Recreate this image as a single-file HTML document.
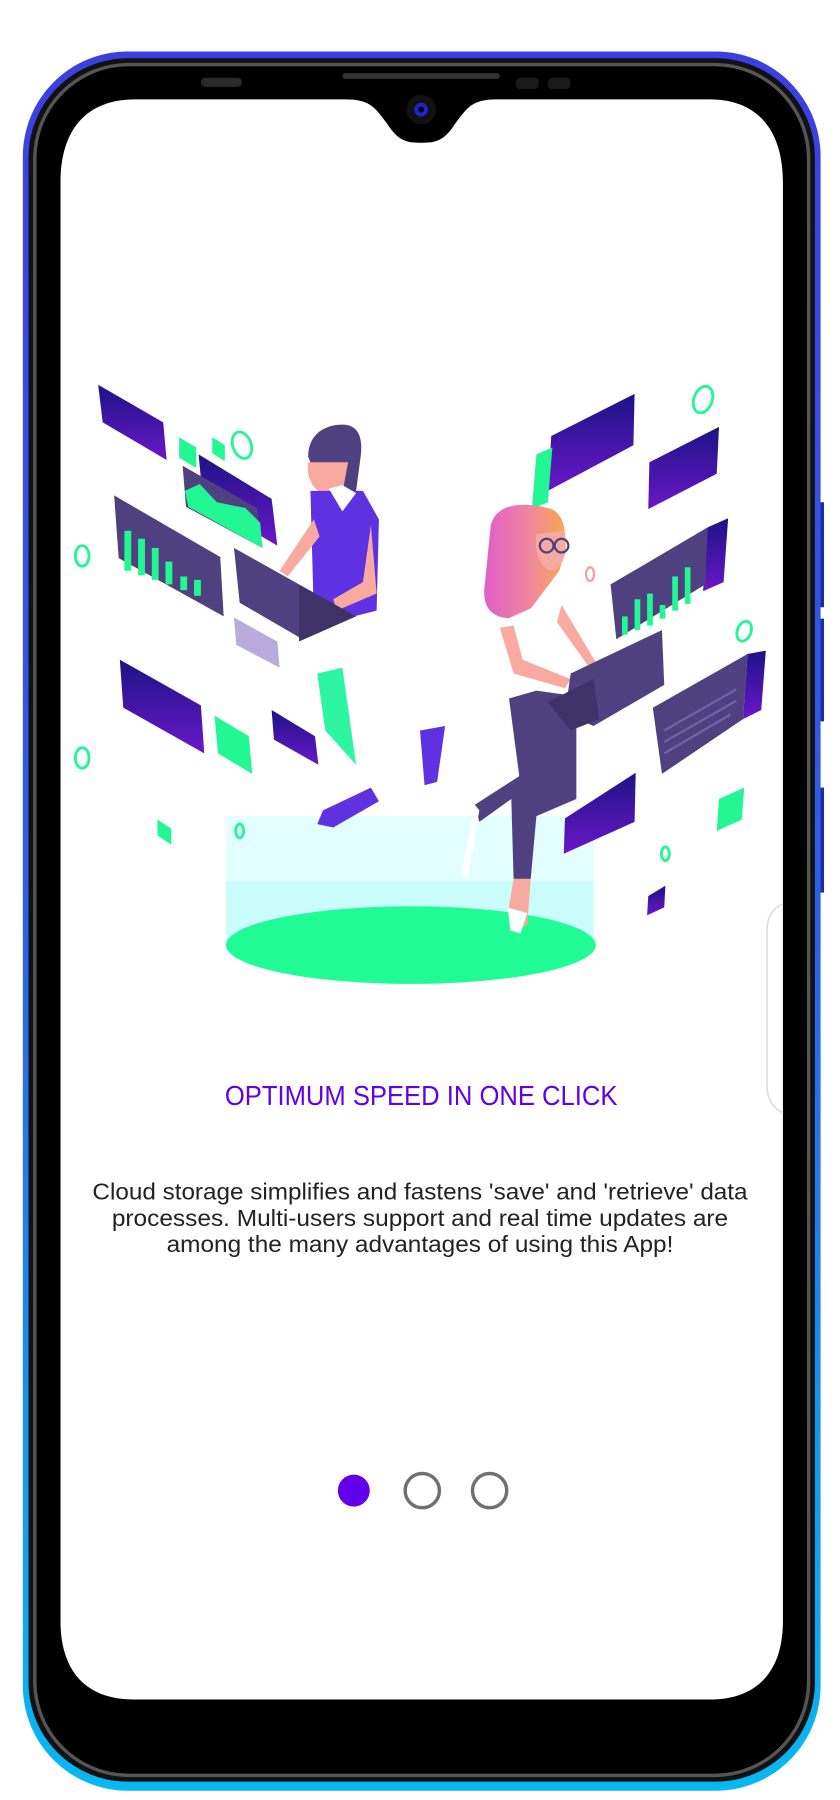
<!DOCTYPE html>
<html><head><meta charset="utf-8">
<style>
html,body{margin:0;padding:0;background:#fff;width:840px;height:1800px;overflow:hidden}
svg{display:block}
</style></head>
<body>
<svg width="840" height="1800" viewBox="0 0 736 1577" xmlns="http://www.w3.org/2000/svg" font-family="Liberation Sans, sans-serif">
<defs>
<linearGradient id="frame" x1="0" y1="0" x2="0" y2="1">
<stop offset="0" stop-color="#3b3fe0"/><stop offset="0.5" stop-color="#2f5fe6"/><stop offset="1" stop-color="#08b8f2"/>
</linearGradient>
<linearGradient id="pp" x1="0" y1="0" x2="0" y2="1">
<stop offset="0" stop-color="#1c1485"/><stop offset="1" stop-color="#6a16c8"/>
</linearGradient>
<linearGradient id="hair" x1="0" y1="0" x2="1" y2="0">
<stop offset="0" stop-color="#e05ec8"/><stop offset="0.6" stop-color="#f08a9a"/><stop offset="1" stop-color="#f8a850"/>
</linearGradient>
</defs>
<!-- phone -->
<rect x="716" y="440" width="6" height="92" fill="#1a2ea0"/>
<rect x="716" y="542" width="6" height="90" fill="#1a2ea0"/>
<rect x="716" y="690" width="6" height="92" fill="#1a2ea0"/>
<rect x="20" y="45" width="699" height="1524" rx="92" fill="url(#frame)"/>
<rect x="25" y="51" width="689" height="1510" rx="87" fill="#111"/>
<rect x="29" y="55" width="681" height="1502" rx="84" fill="#555"/>
<rect x="32" y="58" width="675" height="1496" rx="81" fill="#000"/>
<rect x="300" y="64" width="138" height="5" rx="2.5" fill="#333"/>
<rect x="176" y="68" width="36" height="8" rx="4" fill="#2a2a2a"/>
<rect x="452" y="68" width="20" height="10" rx="4" fill="#1a1a1a"/>
<rect x="480" y="68" width="20" height="10" rx="4" fill="#1a1a1a"/>
<!-- screen -->
<path d="M118 87 H303 C325 87 329 95 339 108 C349 124 357 125 369 125 C381 125 389 124 399 108 C409 95 413 87 435 87 H622 C662 87 686 112 686 160 V1420 C686 1466 662 1489 622 1489 H117 C77 1489 53 1466 53 1420 V160 C53 112 77 87 118 87 Z" fill="#fff"/>
<circle cx="369" cy="96" r="13" fill="#111"/>
<circle cx="369" cy="96" r="6" fill="#2222cc"/>
<circle cx="369" cy="96" r="2.5" fill="#000"/>
<path d="M686 792 C676 796 672 805 672 815 V950 C672 962 676 970 686 975" fill="none" stroke="#ddd" stroke-width="1.5"/>

<!-- illustration -->
<rect x="198" y="715" width="322" height="113" fill="#e2fefe"/>
<rect x="198" y="772" width="322" height="56" fill="#cbfcfc"/>
<ellipse cx="360" cy="828" rx="162" ry="34" fill="#21fb95"/>
<g fill="url(#pp)">
<polygon points="86,337 143,370 146,403 90,370"/>
<polygon points="174,398 238,437 243,478 178,440"/>
<polygon points="105,578 176,618 179,660 108,620"/>
<polygon points="238,622 276,645 279,670 240,648"/>
<polygon points="483,382 556,345 555,390 480,430"/>
<polygon points="569,405 630,374 628,415 568,446"/>
<polygon points="495,717 557,677 556,720 494,748"/>
<polygon points="568,785 583,776 582,795 567,802"/>
<polygon points="620,462 638,454 634,510 616,518"/>
<polygon points="655,573 671,570 667,622 651,630"/>
</g>
<g fill="#22f794">
<polygon points="157,383 172,392 172,410 157,401"/>
<polygon points="186,383 197,390 197,404 186,397"/>
<polygon points="138,718 150,726 150,740 138,732"/>
<polygon points="470,398 484,392 480,440 466,446"/>
<polygon points="188,627 218,645 221,678 191,660"/>
<polygon points="630,700 652,690 650,718 628,728"/>
</g>
<polygon points="100,434 193,488 196,540 104,489" fill="#4f4080"/>
<g fill="#22f794"><rect x="109" y="465" width="6" height="35"/><rect x="121" y="472" width="6" height="32"/><rect x="133" y="480" width="6" height="28"/><rect x="145" y="492" width="6" height="20"/><rect x="158" y="505" width="6" height="12"/><rect x="170" y="508" width="6" height="14"/></g>
<polygon points="160,408 225,445 230,480 163,444" fill="#4f4080"/>
<polygon points="162,430 175,424 190,440 215,445 228,458 230,480 165,444" fill="#22f794"/>
<polygon points="205,541 243,562 245,585 207,565" fill="#b9acdc"/>
<polygon points="535,512 620,462 618,512 540,560" fill="#4f4080"/>
<g fill="#22f794"><rect x="545" y="540" width="5" height="16"/><rect x="556" y="525" width="5" height="27"/><rect x="567" y="520" width="5" height="28"/><rect x="578" y="530" width="5" height="12"/><rect x="589" y="505" width="5" height="30"/><rect x="600" y="497" width="5" height="32"/></g>
<polygon points="572,620 655,573 651,630 580,678" fill="#4f4080"/>
<g stroke="#6f62a8" stroke-width="2"><line x1="582" y1="640" x2="645" y2="604"/><line x1="582" y1="650" x2="645" y2="614"/><line x1="582" y1="660" x2="640" y2="626"/></g>
<g fill="none" stroke="#22f794" stroke-width="2.5">
<ellipse cx="616" cy="350" rx="8" ry="12" transform="rotate(20 616 350)"/>
<ellipse cx="212" cy="390" rx="8" ry="12" transform="rotate(-20 212 390)"/>
<ellipse cx="72" cy="487" rx="6" ry="9"/>
<ellipse cx="72" cy="664" rx="6" ry="9"/>
<ellipse cx="652" cy="553" rx="6" ry="9" transform="rotate(20 652 553)"/>
<ellipse cx="210" cy="728" rx="3.5" ry="6"/>
<ellipse cx="583" cy="748" rx="3.5" ry="6"/>
</g>
<ellipse cx="517" cy="503" rx="3.5" ry="6" fill="none" stroke="#f4a0a0" stroke-width="2"/>
<!-- man -->
<path d="M278 590 L285 640 L312 670 L300 585 Z" fill="#2ef5a0"/>
<path d="M270 400 C270 380 285 372 300 372 C315 372 318 385 316 400 L312 430 L285 438 Z" fill="#4f4080"/>
<path d="M270 405 C268 420 275 432 290 435 L300 432 L305 405 Z" fill="#f8aaa0"/>
<path d="M272 430 L318 430 L332 455 L330 535 L290 545 L275 540 Z" fill="#5e32e0"/>
<polygon points="288,428 300,425 312,432 300,448" fill="#fff"/>
<path d="M275 455 L245 500 L252 505 L280 470 Z" fill="#f8aaa0"/>
<path d="M325 460 L330 520 L295 535 L292 525 L318 510 Z" fill="#f8aaa0"/>
<polygon points="205,480 262,512 265,560 210,528" fill="#4f4080"/>
<polygon points="262,512 312,540 262,562" fill="#3e3268"/>
<path d="M283 710 L325 690 L332 702 L292 725 L278 722 Z" fill="#5e32e0"/>
<path d="M368 640 L390 636 L383 685 L372 688 Z" fill="#5e32e0"/>
<!-- woman -->
<path d="M430 460 C435 440 460 440 480 445 C495 448 500 470 490 500 L460 540 C440 545 420 540 425 510 Z" fill="url(#hair)"/>
<path d="M470 468 C468 480 472 500 485 500 C495 495 498 480 494 465 Z" fill="#f8aaa0"/>
<circle cx="479" cy="478" r="6" fill="none" stroke="#4f4080" stroke-width="2"/>
<circle cx="492" cy="478" r="6" fill="none" stroke="#4f4080" stroke-width="2"/>
<path d="M438 545 L495 520 L505 560 L500 605 L450 612 L445 575 Z" fill="#fff"/>
<path d="M438 550 L450 590 L495 603 L500 595 L458 578 L450 548 Z" fill="#f8aaa0"/>
<path d="M492 530 L525 585 L520 590 L488 545 Z" fill="#f8aaa0"/>
<path d="M446 612 L470 605 L505 610 L505 700 L470 715 L465 770 L450 770 L448 700 L420 720 L416 705 L455 680 Z" fill="#4f4080"/>
<path d="M420 710 L416 705 L404 765 L410 770 Z" fill="#fff"/>
<path d="M450 770 L465 770 L462 810 L452 815 L445 800 Z" fill="#f8aaa0"/>
<path d="M445 795 L462 800 L456 818 L447 815 Z" fill="#fff"/>
<polygon points="500,590 580,552 582,600 520,636 495,625" fill="#4f4080"/>
<polygon points="480,615 520,595 525,630 500,640" fill="#3e3268"/>

<!-- text -->
<text x="369" y="968" text-anchor="middle" font-size="24" fill="#6200ea" textLength="344" lengthAdjust="spacingAndGlyphs">OPTIMUM SPEED IN ONE CLICK</text>
<g font-size="20" fill="#222" text-anchor="middle">
<text x="368" y="1051" textLength="574" lengthAdjust="spacingAndGlyphs">Cloud storage simplifies and fastens 'save' and 'retrieve' data</text>
<text x="368" y="1074" textLength="540" lengthAdjust="spacingAndGlyphs">processes. Multi-users support and real time updates are</text>
<text x="368" y="1097" textLength="444" lengthAdjust="spacingAndGlyphs">among the many advantages of using this App!</text>
</g>
<!-- dots -->
<circle cx="310" cy="1306" r="14" fill="#6200ea"/>
<circle cx="370" cy="1306" r="15" fill="none" stroke="#707070" stroke-width="3"/>
<circle cx="429" cy="1306" r="15" fill="none" stroke="#707070" stroke-width="3"/>
</svg>
</body></html>
